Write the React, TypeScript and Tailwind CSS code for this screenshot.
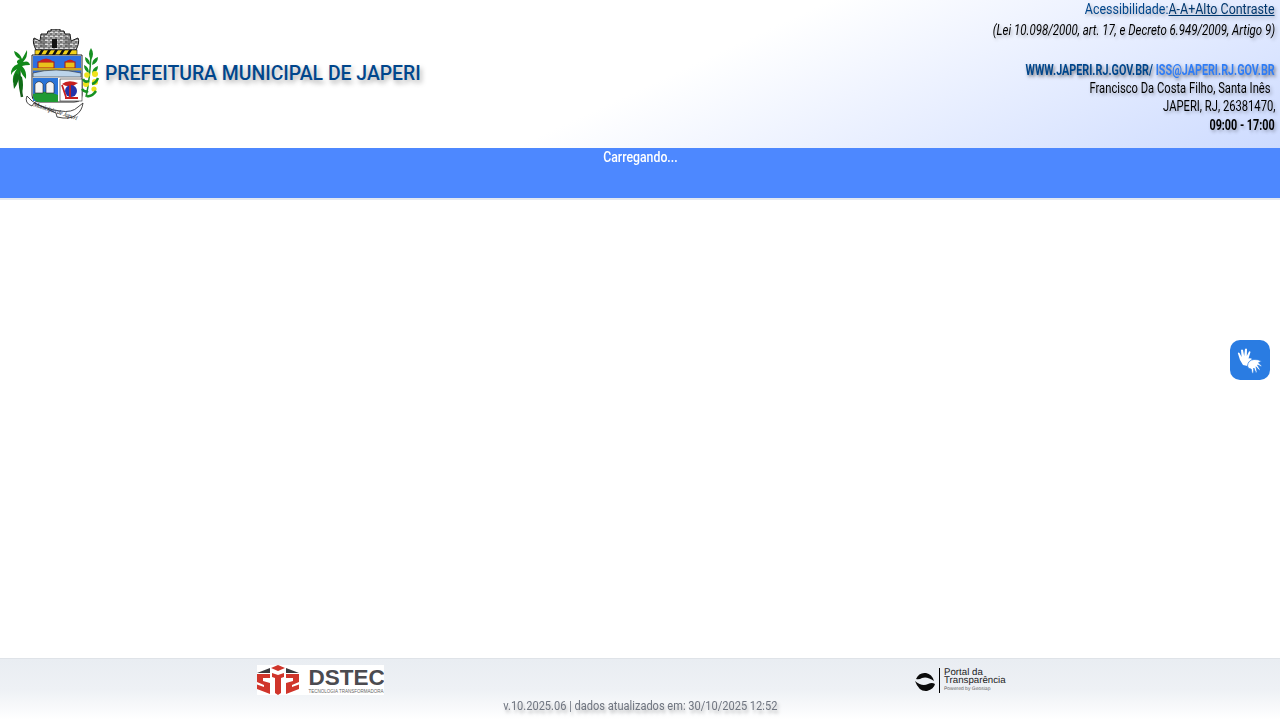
import React from "react";

const Crest = () => (
  <svg width="90" height="92" viewBox="0 0 90 92" className="shrink-0">
    <defs>
      <pattern id="stone" width="5" height="4" patternUnits="userSpaceOnUse">
        <rect width="5" height="4" fill="#e2e2e2" />
        <path d="M0 0H5M0 2H5M1 0V2M4 2V4" stroke="#222" strokeWidth="0.7" />
      </pattern>
    </defs>
    {/* crown */}
    <path d="M24 9 L30 12 L31 5 H37 L38 2 H41 V0 H50 V2 H54 L55 5 H60 L61 12 L68 9 Q70 13 66 21 H26 Q22 13 24 9Z" fill="url(#stone)" stroke="#1a1a1a" strokeWidth="1" />
    <rect x="42" y="10" width="5" height="9" fill="#111" />
    <path d="M30 10 L35 6 V18 L30 18Z M55 6 L60 10 V18 L55 18Z" fill="#555" opacity="0.5" />
    {/* yellow-black stripe */}
    <rect x="25" y="21" width="42" height="5" fill="#f2d21a" stroke="#111" strokeWidth="0.6" />
    <path d="M28 26 l3 -5 h3 l-3 5z M35 26 l3 -5 h3 l-3 5z M42 26 l3 -5 h3 l-3 5z M49 26 l3 -5 h3 l-3 5z M56 26 l3 -5 h3 l-3 5z" fill="#111" />
    {/* shield */}
    <path d="M22 26 H72 V66 Q72 73 64 73 H30 Q22 73 22 66 Z" fill="#fff" stroke="#222" strokeWidth="1" />
    <rect x="23" y="27" width="48" height="21" fill="#2e6fe0" />
    <rect x="28" y="33" width="16" height="6" fill="#e9c21c" stroke="#a81414" strokeWidth="1" />
    <rect x="55" y="33" width="10" height="6" fill="#e9c21c" stroke="#a81414" strokeWidth="1" />
    <path d="M28 33 Q36 26 44 33Z M55 33 Q60 28 65 33Z" fill="#c62020" />
    <rect x="23" y="39" width="48" height="2.5" fill="#c9a422" />
    <path d="M23 44 Q45 38 71 44 V48 H23Z" fill="#bcd4ea" stroke="#333" strokeWidth="0.6" />
    <rect x="23" y="49" width="25" height="23" fill="#2a74d8" />
    <path d="M23 65 Q36 60 48 66 V73 H30 Q23 73 23 66Z" fill="#1f9a33" />
    <path d="M25 55 Q29 50 33 55 V64 H25Z M36 55 Q40 50 44 55 V64 H36Z" fill="#f4f4f4" stroke="#222" strokeWidth="0.6" />
    <rect x="50" y="50" width="22" height="22" fill="#fff" stroke="#222" strokeWidth="0.6" />
    <path d="M52 55 Q58 50 68 54 L63 57 Q56 58 52 55Z" fill="#c62020" />
    <circle cx="61" cy="62" r="6" fill="#2433a8" />
    <path d="M52 56 L56 68 M60 56 V69 M55 69 H68" stroke="#c62020" strokeWidth="1.8" fill="none" />
    {/* palm */}
    <path d="M12 68 Q8 50 10 34" stroke="#165c19" strokeWidth="2.5" fill="none" />
    <path d="M10 30 Q5 28 4 22 Q10 24 12 30 Q15 25 17 21 Q18 28 13 33 Q19 31 20 36 Q15 36 12 37 Q17 42 16 50 Q12 46 10 41 Q9 50 3 54 Q2 46 7 40 Q3 42 1 46 Q0 38 8 35 Q5 32 10 30Z" fill="#12891a" />
    <path d="M6 44 Q2 50 4 60 Q7 56 9 50 Q9 58 12 64 Q14 56 12 48 Z" fill="#0f6d16" />
    {/* branch */}
    <path d="M76 68 Q80 50 81 24" stroke="#1d8d23" strokeWidth="1.5" fill="none" />
    <path d="M81 19 Q77 25 81 31 Q85 25 81 19Z M75 28 Q75 34 80 36 Q80 30 75 28Z M88 28 Q88 34 82 36 Q82 30 88 28Z M74 36 Q74 42 79 44 Q79 38 74 36Z M88 37 Q88 43 82 45 Q82 39 88 37Z" fill="#169122" />
    <circle cx="85" cy="45" r="3" fill="#efe21c" /><circle cx="77" cy="46" r="2.8" fill="#efe21c" /><circle cx="85" cy="53" r="3" fill="#efe21c" /><circle cx="76" cy="55" r="3" fill="#efe21c" /><circle cx="84" cy="60" r="2.6" fill="#efe21c" />
    <path d="M73 50 Q75 54 79 52 M88 49 Q86 54 82 55 M72 60 Q75 64 78 62 M86 62 Q82 68 77 67" stroke="#169122" strokeWidth="2.5" fill="none" />
    {/* ribbon */}
    <path d="M17 67 Q14 74 22 77 L24 74 L46 84 L47 88 Q60 91 66 86 Q72 82 73 74 L68 78 Q62 84 50 82 Q34 80 22 72 Z" fill="#fff" stroke="#333" strokeWidth="0.9" />
    <text x="23" y="77" fontSize="6.5" fontStyle="italic" fontFamily="Liberation Serif, serif" fill="#222" transform="rotate(18 23 77)" textLength="46">Município de Japeri</text>
  </svg>
);

const Hands = () => (
  <svg width="26" height="28" viewBox="0 0 26 28" fill="#fff">
    <path d="M3 14 L0.8 7 Q1.5 6 2.5 7 L4.6 11 L4 4 Q5 3 6 4 L7.2 10 L8 3 Q9 2 10 3 L9.8 10 L12 5.5 Q13 5 13.5 6 L11.5 12.5 Q14 12 15 13 L11.5 16.5 L10.5 20 L6 19 Z" />
    <path d="M10.5 20 Q11 14 17 13.5 Q21 13 25 15.5 Q22 15.5 21.5 17 L24.5 19.5 Q25 20.5 24 20.5 L20.5 19 L23 23.5 Q23 24.5 22 24 L19 20.8 L20 26 Q19.5 27 18.5 26 L16.8 22 L16.5 27 Q15.5 27.5 15 26.5 L14.2 23 Q11 23 10.5 20Z" stroke="#2a7ce2" strokeWidth="0.7" />
  </svg>
);

const narrow = "inline-block origin-right whitespace-nowrap";

export default function App() {
  return (
    <div className="relative flex h-screen flex-col overflow-hidden bg-white font-['Roboto',sans-serif] text-[14px]">
      <header className="flex h-[148px] shrink-0 justify-between bg-[linear-gradient(155deg,#ffffff_0%,#ffffff_52%,#cddbff_100%)]">
        <div className="flex items-center pl-[10px]">
          <div className="mt-[1px]"><Crest /></div>
          <h1 className="ml-[5px] text-[19.4px] font-medium text-[#00468c] [text-shadow:2px_3px_5px_rgba(0,0,0,0.35)]">
            PREFEITURA MUNICIPAL DE JAPERI
          </h1>
        </div>
        <div className="flex flex-col items-end pr-[5px] text-right leading-[18px] text-black [text-shadow:2px_2px_4px_rgba(0,0,0,0.3)]">
          <div className={`${narrow} h-[20px] scale-x-[0.83] text-[15px] text-[#00468c]`}>
            Acessibilidade:<span className="underline text-[#00376e]">A-A+Alto Contraste</span>
          </div>
          <div className={`${narrow} mt-[1px] h-[40px] scale-x-[0.83] text-[13.8px] italic`}>(Lei 10.098/2000, art. 17, e Decreto 6.949/2009, Artigo 9)</div>
          <div className={`${narrow} h-[18px] scale-x-[0.77] text-[14px] font-bold text-[#00468c] [text-shadow:2px_2px_4px_rgba(0,0,0,0.5)]`}>
            WWW.JAPERI.RJ.GOV.BR/ <span className="text-[#2e7cf6]">ISS@JAPERI.RJ.GOV.BR</span>
          </div>
          <div className={`${narrow} h-[18px] scale-x-[0.80] pr-[6px] text-[14px]`}>Francisco Da Costa Filho, Santa Inês</div>
          <div className={`${narrow} h-[19px] scale-x-[0.80] text-[14px]`}>JAPERI, RJ, 26381470,</div>
          <div className={`${narrow} h-[18px] scale-x-[0.77] text-[14px] font-bold`}>09:00 - 17:00</div>
        </div>
      </header>

      <div className="h-[52px] shrink-0 border-b-2 border-[#e3e8f1] bg-[#4d88ff] text-center text-[15px] font-medium leading-[18px] text-white">
        <span className="inline-block origin-center scale-x-[0.82]">Carregando...</span>
      </div>

      <main className="flex-1" />

      <footer className="flex h-[62px] shrink-0 flex-col border-t border-[#dfe3e8] bg-[linear-gradient(180deg,#e9edf2_0%,#eef1f5_50%,#ffffff_100%)]">
        <div className="grid flex-1 grid-cols-2">
          <div className="flex justify-center pt-[6px]">
            <div className="flex h-[30px] w-[127px] overflow-hidden bg-white">
              <svg width="42" height="30" viewBox="0 0 42 30" className="shrink-0">
                <path d="M0 8 L13 3 V8Z M42 8 L29 3 V8Z" fill="#3a3a3e" />
                <path d="M14 3 L21 0 L28 3 L21 6Z" fill="#d0352b" />
                <path d="M0 9 H13 V13 H6 V16 L13 18 V29 L0 24 V19.5 L7 22 V20 L0 17Z" fill="#d0352b" />
                <path d="M15 8 L21 10 L27 8 V12 L24 13 V28 L21 30 L18 28 V13 L15 12Z" fill="#d0352b" />
                <path d="M42 9 H29 V13 H36 V16 L29 18 V29 L42 24 V19.5 L35 22 V20 L42 17Z" fill="#d0352b" />
              </svg>
              <div className="ml-[10px] flex flex-col">
                <span className="h-[23px] font-['Liberation_Sans',sans-serif] text-[22.5px] font-bold leading-[26px] text-[#4b4b50]">DSTEC</span>
                <span className="mt-[1px] whitespace-nowrap font-['Liberation_Sans',sans-serif] text-[4.5px] leading-[5px] text-[#666]">TECNOLOGIA TRANSFORMADORA</span>
              </div>
            </div>
          </div>
          <div className="flex justify-center pt-[8px]">
            <div className="flex h-[26px] w-[92px] items-center">
              <svg width="24" height="24" viewBox="0 -3 24 24" className="shrink-0">
                <path d="M2 8 Q5 1 12 2 Q18 3 20 10 Q13 5 8 7 Q5 9 2 8Z" fill="#0b0b0b" />
                <path d="M1 10 Q8 16 14 13 Q18 11 21 13 Q20 18 13 20 Q5 21 1 10Z" fill="#0b0b0b" />
              </svg>
              <div className="ml-[1px] flex h-[25px] flex-col border-l border-black pl-[4px] pt-[1px] font-['Liberation_Sans',sans-serif] leading-[8.5px] text-[#222] [text-rendering:geometricPrecision]">
                <span className="text-[9.7px]">Portal da</span>
                <span className="text-[9.7px]">Transparência</span>
                <span className="text-[5px] leading-[7px] text-[#666]">Powered by Geosiap</span>
              </div>
            </div>
          </div>
        </div>
        <div className="mb-[6px] text-center text-[13px] leading-[16px] text-[#6f7580] [text-shadow:2px_3px_4px_rgba(0,0,0,0.3)]">
          <span className="inline-block origin-center scale-x-[0.85]">v.10.2025.06 | dados atualizados em: 30/10/2025 12:52</span>
        </div>
      </footer>

      <button className="absolute left-[1230px] top-[340px] flex h-10 w-10 items-center justify-center rounded-[10px] bg-[#2a7ce2]">
        <Hands />
      </button>
    </div>
  );
}
